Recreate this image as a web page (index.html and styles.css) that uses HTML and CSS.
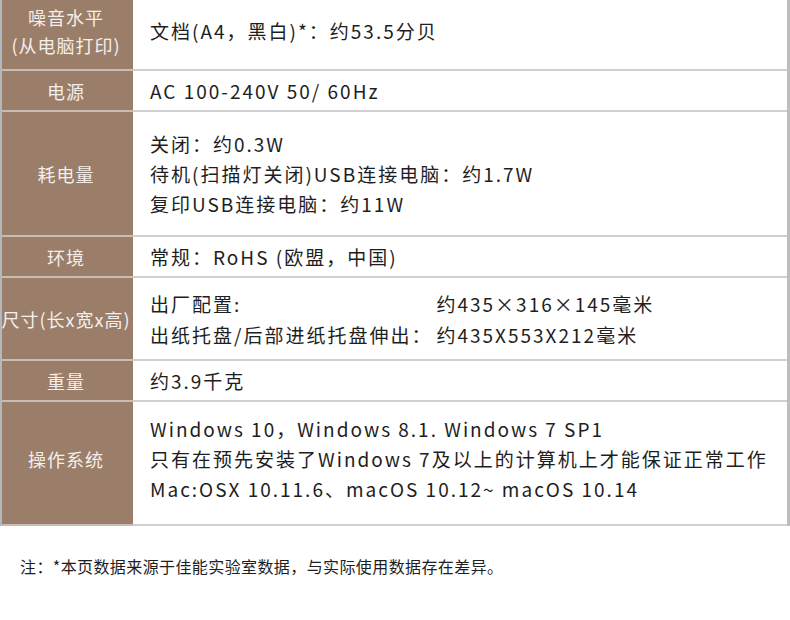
FILE: index.html
```html
<!DOCTYPE html>
<html lang="zh-CN">
<head>
<meta charset="utf-8">
<link rel="stylesheet" href="styles.css">
</head>
<body>
<div class="spec">
  <div class="label raise">噪音水平<br>(从电脑打印)</div>
  <div class="value raise">文档(A4，黑白)*：约53.5分贝</div>

  <div class="label">电源</div>
  <div class="value">AC 100-240V 50/ 60Hz</div>

  <div class="label">耗电量</div>
  <div class="value">关闭：约0.3W<br>待机(扫描灯关闭)USB连接电脑：约1.7W<br>复印USB连接电脑：约11W</div>

  <div class="label">环境</div>
  <div class="value">常规：RoHS (欧盟，中国)</div>

  <div class="label">尺寸(长x宽x高)</div>
  <div class="value">
    <div class="dims">
      <span>出厂配置:</span><span>约435×316×145毫米</span>
      <span>出纸托盘/后部进纸托盘伸出：</span><span>约435X553X212毫米</span>
    </div>
  </div>

  <div class="label">重量</div>
  <div class="value">约3.9千克</div>

  <div class="label raise">操作系统</div>
  <div class="value raise">Windows 10，Windows 8.1. Windows 7 SP1<br>只有在预先安装了Windows 7及以上的计算机上才能保证正常工作<br>Mac:OSX 10.11.6、macOS 10.12~ macOS 10.14</div>
</div>
<p class="note">注：*本页数据来源于佳能实验室数据，与实际使用数据存在差异。</p>
</body>
</html>
```
FILE: styles.css
```css
html, body {
  margin: 0;
  padding: 0;
  background: #ffffff;
}
body {
  width: 790px;
  font-family: "Noto Sans CJK SC", "Noto Sans", sans-serif;
}
.spec {
  display: grid;
  grid-template-columns: 131px 1fr;
  grid-template-rows: 71px 41px 125px 41px 83px 41px 124px;
  border-left: 2px solid #b3b8bc;
  border-right: 3px solid #bdbdbd;
}
.label, .value {
  display: flex;
  align-items: center;
  border-bottom: 2px solid #d0d0d0;
  font-size: 19px;
  line-height: 30px;
}
.raise {
  padding-bottom: 8px;
}
.label {
  background: #9a7e6a;
  color: #f4efea;
  justify-content: center;
  text-align: center;
  font-size: 18px;
  line-height: 28px;
  letter-spacing: 1px;
  padding-right: 3px;
  white-space: nowrap;
  border-bottom-color: #c9bcb2;
}
.value {
  padding-left: 17px;
  color: #1e1e1e;
  letter-spacing: 2px;
}
.dims {
  display: grid;
  grid-template-columns: auto auto;
  column-gap: 4px;
  line-height: 31px;
}
.note {
  margin: 28px 0 0 20px;
  font-size: 16px;
  line-height: 24px;
  color: #1e1e1e;
  letter-spacing: 0.4px;
}
```
